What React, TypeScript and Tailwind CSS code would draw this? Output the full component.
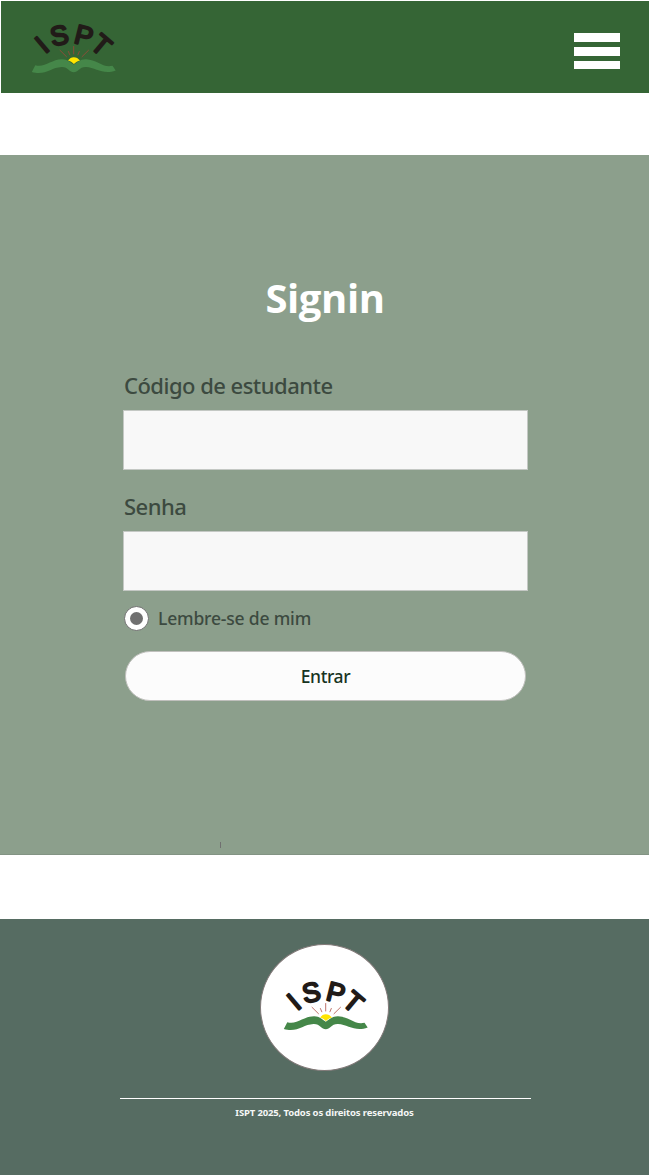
import React from "react";

function Logo({ className = "" }: { className?: string }) {
  return (
    <svg
      className={className}
      width="90"
      height="56"
      viewBox="30 20 90 56"
      role="img"
      aria-label="ISPT"
    >
      <g
        fontFamily="'Liberation Sans', Arial, sans-serif"
        fontWeight="400"
        fontSize="27"
        fill="#211b18"
        stroke="#211b18"
        strokeWidth="2.1"
        strokeLinejoin="round"
        textAnchor="middle"
      >
        <text transform="translate(42 44.6) rotate(-40)" y="9.3">I</text>
        <text transform="translate(59.3 35.3) rotate(-11)" y="9.3">S</text>
        <text transform="translate(84 35.6) rotate(14)" y="9.3">P</text>
        <text transform="translate(101.2 45) rotate(40)" y="9.3">T</text>
      </g>
      <g stroke="#a8443a" strokeWidth="0.75" strokeLinecap="round">
        <path d="M60 50.3L66.5 56.7M68.4 51.5L69.8 54.8M73.7 46.5V54M79.3 51.5L77.9 54.8M88.5 50.3L82 56.7" />
      </g>
      <path
        d="M35.3 65.3C45 68 51 59.5 62 59.3C68 59.2 70 62.5 73.8 64.8C77.5 62.5 80 59.2 86 59.3C97 59.7 103 68.3 112.5 65.8L115.7 70.5C103 75.3 96 67.5 86 67C79.5 66.7 78 72.3 73.8 72.3C69.5 72.3 68 66.7 61.5 67C51 67.5 45 76 31.8 72Z"
        fill="#458749"
      />
      <path
        d="M68 60.6C69.8 58.4 71.3 57.2 73.8 57.2C76.3 57.2 78.2 58.4 80 60.6C77.6 60.9 76 62.4 73.9 64.1C72 62.4 70.4 60.9 68 60.6Z"
        fill="#ffe500"
      />
    </svg>
  );
}

function Field({ label, type }: { label: string; type: string }) {
  return (
    <label className="block">
      <span className="ml-px block h-[39px] font-['Noto_Sans'] text-[22px] leading-[28px] font-medium tracking-[-0.52px] text-[#3c4a40]">
        {label}
      </span>
      <input
        type={type}
        className="block h-[60px] w-[405px] border border-[#c4c8c4] bg-[#f8f8f8] px-4 outline-none"
      />
    </label>
  );
}

export default function App() {
  return (
    <div className="min-h-[1175px] w-full bg-white font-['Open_Sans','Noto_Sans',sans-serif]">
      <div className="pt-px pl-px">
        <header className="flex h-[92px] justify-between bg-[#356535] pr-[29px] pl-[29px]">
          <Logo className="mt-[19px]" />
          <button aria-label="Menu" className="mt-8 flex h-9 w-[46px] flex-col gap-[5px]">
            <span className="h-[9px] w-full bg-white" />
            <span className="h-[9px] w-full bg-white" />
            <span className="h-2 w-full bg-white" />
          </button>
        </header>
      </div>

      <main className="mt-[62px] flex h-[700px] flex-col border-b border-[#829383] bg-[#8c9f8c] pt-[114px]">
        <h1 className="h-[102px] pl-px text-center text-[40px] leading-[58px] font-bold tracking-[-0.4px] text-white">
          Signin
        </h1>
        <form className="ml-[123px] w-[405px]">
          <Field label="Código de estudante" type="text" />
          <div className="h-[22px]" />
          <Field label="Senha" type="password" />
          <div className="mt-[15px] ml-px flex h-[25px] items-center gap-[9px]">
            <span className="flex size-[25px] items-center justify-center rounded-full border border-[#707070] bg-white">
              <span className="size-[13px] rounded-full bg-[#707070]" />
            </span>
            <span className="font-['Noto_Sans'] text-[17.5px] leading-[25px] font-medium tracking-[-0.18px] text-[#3c4a40]">
              Lembre-se de mim
            </span>
          </div>
          <button
            type="button"
            className="mt-[20px] ml-[2px] block h-[50px] w-[401px] rounded-[25px] border border-[#c0c0bd] bg-[#fcfcfc] font-['Noto_Sans'] text-[17.5px] font-medium tracking-[-0.4px] text-[#17341f]"
          >
            Entrar
          </button>
        </form>
        <span className="mt-[141px] ml-[220px] h-1.5 w-px bg-[#707070]" />
      </main>

      <footer className="mt-16 flex h-64 flex-col items-center bg-[#566c62] pt-[25px]">
        <div className="flex h-[127px] w-[129px] justify-center rounded-[50%] border border-[#817978] bg-white">
          <Logo className="mt-8 ml-[4px]" />
        </div>
        <hr className="mt-[27px] mr-[-2px] w-[411px] border-t border-white" />
        <p className="mt-[6px] font-['Noto_Sans'] text-[9.5px] leading-[16px] font-bold tracking-[-0.14px] text-[#f5f7f6]">
          ISPT 2025, Todos os direitos reservados
        </p>
      </footer>
    </div>
  );
}
